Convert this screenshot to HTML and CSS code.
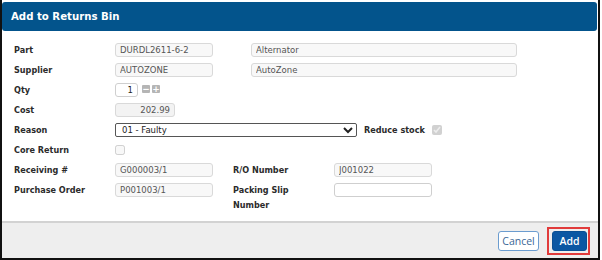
FILE: index.html
```html
<!DOCTYPE html>
<html lang="en">
<head>
    <meta charset="UTF-8">
    <title>Add to Returns Bin</title>
    <link rel="stylesheet" href="styles.css">
</head>
<body>
    <div class="dialog">
        <div class="dialog-header">
            <h1>Add to Returns Bin</h1>
        </div>

        <form class="dialog-body">
            <div class="row">
                <label class="lbl">Part</label>
                <input class="fld fld-code" type="text" value="DURDL2611-6-2" readonly>
                <input class="fld fld-desc" type="text" value="Alternator" readonly>
            </div>
            <div class="row">
                <label class="lbl">Supplier</label>
                <input class="fld fld-code" type="text" value="AUTOZONE" readonly>
                <input class="fld fld-desc" type="text" value="AutoZone" readonly>
            </div>
            <div class="row">
                <label class="lbl">Qty</label>
                <input class="fld fld-qty" type="text" value="1">
                <span class="spin">&minus;</span>
                <span class="spin">+</span>
            </div>
            <div class="row">
                <label class="lbl">Cost</label>
                <input class="fld fld-cost" type="text" value="202.99" readonly>
            </div>
            <div class="row">
                <label class="lbl">Reason</label>
                <select class="reason">
                    <option>01 - Faulty</option>
                    <option>02 - Wrong Part</option>
                    <option>03 - Not Required</option>
                </select>
                <label class="lbl lbl-inline">Reduce stock</label>
                <input class="chk" type="checkbox" checked disabled>
            </div>
            <div class="row">
                <label class="lbl">Core Return</label>
                <input class="chk" type="checkbox" disabled>
            </div>
            <div class="row">
                <label class="lbl">Receiving #</label>
                <input class="fld fld-code" type="text" value="G000003/1" readonly>
                <label class="lbl lbl-second">R/O Number</label>
                <input class="fld fld-code" type="text" value="J001022" readonly>
            </div>
            <div class="row">
                <label class="lbl">Purchase Order</label>
                <input class="fld fld-code" type="text" value="P001003/1" readonly>
                <label class="lbl lbl-second">Packing Slip Number</label>
                <input class="fld fld-code fld-open" type="text" value="">
            </div>
        </form>

        <div class="dialog-footer">
            <button class="btn btn-cancel" type="button">Cancel</button>
            <span class="highlight">
                <button class="btn btn-add" type="button">Add</button>
            </span>
        </div>
    </div>
</body>
</html>
```

FILE: styles.css
```css
body {
    margin: 0;
    background-color: #fff;
    font-family: "DejaVu Sans", Verdana, sans-serif;
}
.dialog {
    width: 600px;
    height: 260px;
    box-sizing: border-box;
    padding-top: 2px;
    border-left: 2px solid #111;
    border-right: 2px solid #111;
    border-bottom: 2px solid #111;
    display: flex;
    flex-direction: column;
    background-color: #fff;
}
.dialog-header {
    height: 29px;
    margin-right: 1px;
    background-color: #03548c;
    border-radius: 3px;
    display: flex;
    align-items: center;
    padding-left: 9px;
}
.dialog-header h1 {
    margin: 0;
    font-family: "DejaVu Sans Condensed", "DejaVu Sans", sans-serif;
    font-size: 11.3px;
    font-weight: bold;
    color: #fff;
}
.dialog-body {
    flex: 1;
    margin: 0;
    padding: 9px 0 0 12px;
}
.row {
    display: flex;
    align-items: flex-start;
    min-height: 20px;
}
.lbl {
    box-sizing: border-box;
    width: 101px;
    flex-shrink: 0;
    padding-top: 3px;
    font-family: "DejaVu Sans Condensed", "DejaVu Sans", sans-serif;
    font-size: 9px;
    line-height: 15px;
    font-weight: bold;
    color: #2b2b2b;
}
.lbl-inline {
    width: auto;
    margin-left: 7px;
    margin-right: 7px;
}
.lbl-second {
    margin-left: 20px;
    padding-right: 22px;
}
.fld {
    box-sizing: border-box;
    height: 14px;
    margin: 3px 0 0 0;
    padding: 0 4px;
    border: 1px solid #d9d9d9;
    border-radius: 3px;
    background-color: #f8f8f8;
    font-family: "DejaVu Sans", Verdana, sans-serif;
    font-size: 8.5px;
    color: #555;
    outline: none;
}
.fld-code {
    width: 98px;
}
.fld-desc {
    width: 266px;
    margin-left: 38px;
}
.fld-qty {
    width: 23px;
    background-color: #fff;
    border-color: #cfcfcf;
    text-align: right;
    color: #222;
}
.fld-cost {
    width: 60px;
    text-align: right;
    background-color: #f3f3f3;
}
.fld-open {
    background-color: #fff;
    border-color: #cfcfcf;
}
.spin {
    width: 8px;
    height: 8px;
    margin-top: 5px;
    margin-left: 2px;
    background-color: #b5b5b5;
    border-radius: 1px;
    color: #fff;
    font-size: 9px;
    font-weight: bold;
    line-height: 8px;
    text-align: center;
}
.fld-qty + .spin {
    margin-left: 4px;
}
.reason {
    box-sizing: border-box;
    width: 242px;
    height: 14px;
    margin: 3px 0 0 0;
    padding: 0 2px;
    border: 1px solid #555;
    border-radius: 2px;
    background-color: #fff;
    font-family: "DejaVu Sans", Verdana, sans-serif;
    font-size: 8.5px;
    color: #222;
}
.chk {
    width: 10px;
    height: 10px;
    margin: 5px 0 0 0;
}
.dialog-footer {
    height: 35px;
    border-top: 2px solid #d2d2d2;
    background-color: #eee;
    display: flex;
    align-items: center;
    justify-content: flex-end;
    padding-right: 8px;
}
.btn {
    height: 20px;
    border-radius: 3px;
    font-family: "Open Sans", sans-serif;
    font-size: 10.5px;
    cursor: pointer;
}
.btn-cancel {
    width: 41px;
    padding: 0;
    border: 1px solid #6b9ccf;
    background-color: #fff;
    color: #3a6796;
}
.highlight {
    display: flex;
    margin-left: 8px;
    padding: 2px 1px 2px 3px;
    border: 2px solid #e13b3b;
}
.btn-add {
    width: 35px;
    padding: 0;
    border: 1px solid #0a4f93;
    background-color: #0b57a3;
    color: #fff;
    font-weight: 600;
}
```
